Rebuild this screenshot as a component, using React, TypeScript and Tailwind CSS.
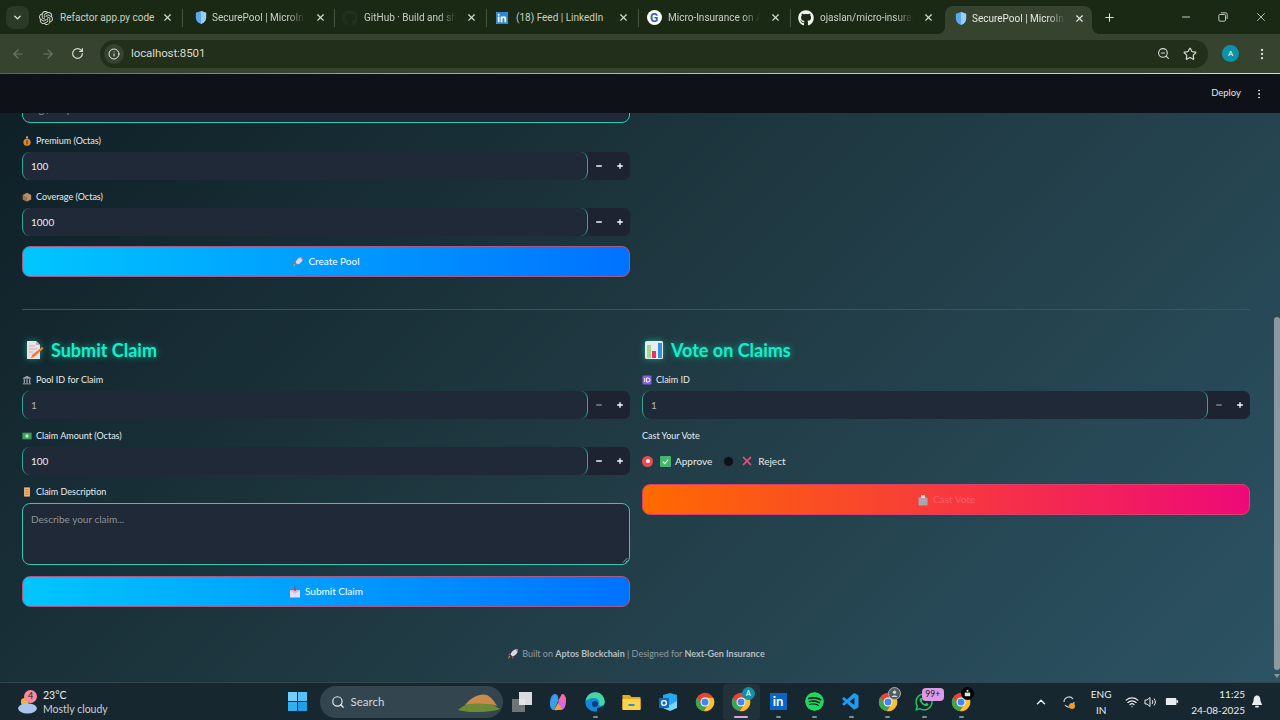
import { ArrowLeft, ArrowRight, ChevronDown, ChevronUp, Info, Minus, MoreVertical, Plus, RotateCw, Search, Star, Wifi, X, ZoomOut } from "lucide-react";
import { ReactNode } from "react";
import { FaGithub, FaWhatsapp } from "react-icons/fa";
import { SiLinkedin, SiOpenai, SiSpotify } from "react-icons/si";
import { VscVscode } from "react-icons/vsc";

const Shield = () => (
  <svg viewBox="0 0 14 16" className="w-[12px] h-[15px]">
    <path d="M7 0.5 L13 2.5 V8 C13 12 10 14.5 7 15.5 C4 14.5 1 12 1 8 V2.5 Z" fill="#5aa9ec" />
    <path d="M7 0.5 L13 2.5 V8 C13 12 10 14.5 7 15.5 Z" fill="#9ccdf3" />
  </svg>
);

const GoogleG = () => (
  <div className="w-[15px] h-[15px] rounded-full bg-white flex items-center justify-center">
    <span className="text-[12px] leading-none font-bold text-[#2b5fb8]">G</span>
  </div>
);

const ChromeIcon = ({ size = 20 }: { size?: number }) => (
  <svg viewBox="0 0 24 24" width={size} height={size}>
    <circle cx="12" cy="12" r="11" fill="#ea4335" />
    <path d="M2.6 6.2 L7.6 14.5 A5 5 0 0 0 13.5 16.8 L10.6 22.9 A11 11 0 0 1 2.6 6.2 Z" fill="#34a853" />
    <path d="M21.9 7 A11 11 0 0 1 10.6 22.9 L15.8 15 A5 5 0 0 0 12 7 Z" fill="#fbc02d" />
    <circle cx="12" cy="12" r="5.4" fill="#fff" />
    <circle cx="12" cy="12" r="4.2" fill="#4285f4" />
  </svg>
);

const tabs = [
  { title: "Refactor app.py code", icon: <SiOpenai size={14} color="#d8ddd4" /> },
  { title: "SecurePool | MicroIns", icon: <div className="ml-[5px]"><Shield /></div>, fade: true },
  { title: "GitHub · Build and sh", icon: <FaGithub size={16} color="#232f1f" />, fade: true },
  { title: "(18) Feed | LinkedIn", icon: <SiLinkedin size={12} color="#2f86d8" className="bg-white" /> },
  { title: "Micro-Insurance on A", icon: <GoogleG />, fade: true },
  { title: "ojaslan/micro-insurar", icon: <FaGithub size={16} color="#f2f4f0" />, fade: true },
];

const Tab = ({ title, icon, last, fade }: { title: string; icon: ReactNode; last: boolean; fade?: boolean }) => (
  <div className={`w-[152px] h-[18px] flex items-center pl-[7px] pr-[9px] gap-[6px] ${last ? "" : "border-r border-[#45523f]"}`}>
    <div className="w-4 flex justify-center shrink-0">{icon}</div>
    <span className={`flex-1 whitespace-nowrap text-[10px] text-[#c9cfc5] ${fade ? "[mask-image:linear-gradient(90deg,#000_78%,transparent_96%)]" : ""}`}>{title}</span>
    <X size={11} color="#d5dad1" strokeWidth={2.5} className="shrink-0" />
  </div>
);

const BrowserChrome = () => (
  <div className="shrink-0 font-['Roboto',sans-serif]">
    <div className="h-[34px] bg-[#1a2914] flex items-end">
      <div className="w-[31px] h-full flex items-center justify-end pr-[2px]">
        <div className="w-[23px] h-[23px] rounded-lg bg-[#2b3a26] flex items-center justify-center">
          <ChevronDown size={11} color="#e6eae3" strokeWidth={3} />
        </div>
      </div>
      <div className="flex items-center h-full pt-[1px]">
        {tabs.map((t, i) => (
          <Tab key={t.title} title={t.title} icon={t.icon} fade={t.fade} last={i === tabs.length - 1} />
        ))}
      </div>
      <div className="relative ml-[2px] w-[147px] h-[28px] bg-[#35432f] rounded-t-lg flex items-center pl-[10px] pr-[7px] pb-[4px] gap-[5px] before:absolute before:bottom-0 before:-left-2 before:w-2 before:h-2 before:bg-[radial-gradient(circle_at_0_0,transparent_8px,#35432f_8px)] after:absolute after:bottom-0 after:-right-2 after:w-2 after:h-2 after:bg-[radial-gradient(circle_at_100%_0,transparent_8px,#35432f_8px)]">
        <Shield />
        <span className="flex-1 whitespace-nowrap text-[10px] text-[#e4e8e1] [mask-image:linear-gradient(90deg,#000_78%,transparent_96%)]">SecurePool | MicroIn</span>
        <X size={11} color="#e4e8e1" strokeWidth={2.5} />
      </div>
      <div className="h-full flex items-center ml-[11px]">
        <Plus size={13} color="#d9ddd6" />
      </div>
      <div className="flex-1 h-full flex items-center justify-end pr-[12px] gap-[26px]">
        <Minus size={12} color="#c9cdc6" />
        <svg viewBox="0 0 12 12" className="w-[10px] h-[10px]" fill="none" stroke="#e2e5df" strokeWidth="1">
          <rect x="1" y="3" width="8" height="8" rx="1.2" />
          <path d="M3.5 1 H9.5 A1.5 1.5 0 0 1 11 2.5 V8.5" />
        </svg>
        <X size={14} color="#e2e5df" strokeWidth={1.3} />
      </div>
    </div>
    <div className="h-[39px] bg-[#35432f] flex items-center pl-[11px] pr-[11px]">
      <ArrowLeft size={14} color="#6f7b69" />
      <ArrowRight size={14} color="#6f7b69" className="ml-[16px]" />
      <RotateCw size={13} color="#d9ddd6" strokeWidth={2.2} className="ml-[16px]" />
      <div className="ml-[16px] flex-1 h-[28px] rounded-full bg-[#212f1b] flex items-center pl-[4px] pr-[11px]">
        <div className="w-[20px] h-[20px] rounded-full bg-[#35432f] flex items-center justify-center">
          <Info size={12} color="#e6eae3" />
        </div>
        <span className="ml-[7px] text-[11.5px] text-[#d8dcd4] tracking-[-0.1px]">localhost:8501</span>
        <div className="flex-1" />
        <ZoomOut size={13} color="#d9ddd6" />
        <Star size={14} color="#d9ddd6" className="ml-[13px]" />
      </div>
      <div className="ml-[14px] w-[17px] h-[17px] rounded-full bg-[#0d93a8] flex items-center justify-center text-[8px] text-white">A</div>
      <MoreVertical size={14} color="#d9ddd6" className="ml-[16px]" />
    </div>
    <div className="h-px bg-[linear-gradient(90deg,#c0392b,#f08a5a_30%,#f5c76a_70%,#f4d58a)]" />
  </div>
);

const Emoji = ({ kind }: { kind: string }) => {
  if (kind === "bag")
    return (
      <svg viewBox="0 0 12 12" className="w-[10px] h-[10px]">
        <rect x="5" y="0.5" width="2" height="2.5" fill="#e8c48c" />
        <circle cx="6" cy="7.5" r="4.3" fill="#e08a2c" />
        <rect x="5.2" y="5" width="1.6" height="5" fill="#6b3d10" />
      </svg>
    );
  if (kind === "box")
    return (
      <svg viewBox="0 0 12 12" className="w-[10px] h-[10px]">
        <path d="M6 1 L11 3.5 V9 L6 11.5 L1 9 V3.5 Z" fill="#b98e6b" />
        <path d="M6 6 V11.5 L1 9 V3.5 Z" fill="#9c7553" />
      </svg>
    );
  if (kind === "bank")
    return (
      <svg viewBox="0 0 12 12" className="w-[10px] h-[10px]" fill="#a09fa9">
        <path d="M6 1 L11 3.5 V4.5 H1 V3.5 Z" />
        <rect x="2" y="5" width="1.6" height="4.5" />
        <rect x="5.2" y="5" width="1.6" height="4.5" />
        <rect x="8.4" y="5" width="1.6" height="4.5" />
        <rect x="1" y="10" width="10" height="1.2" />
      </svg>
    );
  if (kind === "cash")
    return (
      <svg viewBox="0 0 12 12" className="w-[10px] h-[10px]">
        <rect x="0.5" y="2" width="11" height="8" fill="#3aa35a" />
        <circle cx="6" cy="6" r="2" fill="#b6e8c4" />
      </svg>
    );
  if (kind === "scroll")
    return (
      <svg viewBox="0 0 12 12" className="w-[10px] h-[10px]">
        <rect x="2.5" y="0.5" width="7" height="11" fill="#f2b777" />
        <path d="M4 3 H8 M4 5 H8 M4 7 H8 M4 9 H8" stroke="#b96f2c" strokeWidth="0.7" />
      </svg>
    );
  if (kind === "id")
    return (
      <svg viewBox="0 0 10 10" className="w-[10px] h-[10px]">
        <rect x="0.5" y="0.5" width="9" height="9" rx="1" fill="#8a5cd6" />
        <path d="M2.7 3 V7 M4.5 3 V7 H6 A2 2 0 0 0 6 3 H4.5" stroke="#fff" strokeWidth="0.9" fill="none" />
      </svg>
    );
  if (kind === "rocket")
    return (
      <svg viewBox="0 0 12 12" className="w-[12px] h-[12px]">
        <path d="M11 1 C7.5 1 4.5 3 3.5 6.5 L5.5 8.5 C9 7.5 11 4.5 11 1 Z" fill="#d8d8e6" />
        <path d="M11 1 C10 1 9 1.2 8.3 1.6 L10.4 3.7 C10.8 3 11 2 11 1 Z" fill="#e5486d" />
        <path d="M3.5 6.5 L1 7 L3 5 Z M5.5 8.5 L5 11 L7 9 Z" fill="#e5486d" />
        <path d="M3.5 8.5 L1 11 L2 8 Z" fill="#f39c32" />
      </svg>
    );
  if (kind === "inbox")
    return (
      <svg viewBox="0 0 12 12" className="w-[12px] h-[12px]">
        <rect x="1" y="4" width="10" height="7.5" fill="#eadcf2" />
        <path d="M1 4 L6 8 L11 4" fill="#cdbbdc" />
        <rect x="5.2" y="0.5" width="1.6" height="4.5" fill="#d92e66" />
      </svg>
    );
  if (kind === "ballot")
    return (
      <svg viewBox="0 0 12 12" className="w-[12px] h-[12px]">
        <rect x="1.5" y="3.5" width="9" height="8" rx="1" fill="#a9a6ad" />
        <rect x="4" y="1" width="4" height="3" fill="#d8d6da" />
      </svg>
    );
  return null;
};

const Label = ({ icon, text }: { icon: string; text: string }) => (
  <div className="h-[12px] flex items-center gap-[4px] text-[9px] text-[#e8ecef] mb-[5px]">
    <Emoji kind={icon} />
    <span>{text}</span>
  </div>
);

const StepInput = ({ icon, label, value, faded }: { icon: string; label: string; value: string; faded?: boolean }) => (
  <div>
    <Label icon={icon} text={label} />
    <div className="h-[28px] flex rounded-[7px] bg-[#1f2937]">
      <div className="flex-1 flex items-center pl-[8px] rounded-[8px] border-x border-[#2aa99a] text-[10px]">
        <span className={faded ? "text-[#aeb4bb]" : "text-[#e8ecef]"}>{value}</span>
      </div>
      <div className="w-[42px] flex items-center rounded-r-[7px] bg-[#1d2330]">
        <div className="flex-1 flex justify-center"><Minus size={8} strokeWidth={4} color={faded ? "#7b838c" : "#f0f2f5"} /></div>
        <div className="flex-1 flex justify-center"><Plus size={8} strokeWidth={4} color="#f8fafc" /></div>
      </div>
    </div>
  </div>
);

const BlueButton = ({ icon, label }: { icon: string; label: string }) => (
  <button className="w-full h-[31px] rounded-[8px] border border-[#a85a86] bg-[linear-gradient(90deg,#00c6ff,#0072ff)] flex items-center justify-center gap-[4px] text-[10px] text-white">
    <Emoji kind={icon} />
    {label}
  </button>
);

const Heading = ({ icon, text }: { icon: ReactNode; text: string }) => (
  <h2 className="h-[20px] pl-[2px] flex items-center gap-[7px] text-[18px] font-bold text-[#0ff0cc] [text-shadow:0_0_7px_rgba(0,255,208,0.6)] mb-[14px]">
    {icon}
    {text}
  </h2>
);

const MemoIcon = () => (
  <svg viewBox="0 0 20 20" className="w-[20px] h-[20px] [filter:drop-shadow(0_0_3px_rgba(0,255,208,0.5))]">
    <path d="M3 1 H12 L16 5 V19 H3 Z" fill="#ecdfe6" />
    <path d="M12 1 L16 5 H12 Z" fill="#bfb2bb" />
    <path d="M5 6 H11 M5 9 H13 M5 12 H9" stroke="#b9acb5" strokeWidth="0.8" />
    <path d="M18 7 L19.5 8.5 L10 17 L7 18 L8 15 Z" fill="#f07a3a" />
  </svg>
);

const ChartIcon = () => (
  <svg viewBox="0 0 20 20" className="w-[20px] h-[20px] [filter:drop-shadow(0_0_3px_rgba(0,255,208,0.5))]">
    <rect x="1" y="1" width="18" height="18" rx="1.5" fill="#e6edf0" />
    <rect x="3" y="5" width="4" height="13" fill="#a9d78a" />
    <rect x="8" y="11" width="4" height="7" fill="#e5336f" />
    <rect x="14" y="3" width="4" height="15" fill="#3c8dd6" />
  </svg>
);

const Radio = ({ on }: { on?: boolean }) =>
  on ? (
    <div className="w-[11px] h-[11px] rounded-full bg-[#f0484f] flex items-center justify-center">
      <div className="w-[4px] h-[4px] rounded-full bg-white" />
    </div>
  ) : (
    <div className="w-[11px] h-[11px] rounded-full bg-[#0e1117] border border-[#2c3a45]" />
  );

const Main = () => (
  <div className="h-[569px] flex overflow-hidden bg-[linear-gradient(135deg,#0f2027,#203a43_50%,#2c5364)]">
    <div className="flex-1 pl-[22px] pr-[22px]">
      <div className="w-[608px] -mt-[18px] h-[28px] rounded-[8px] border border-[#2fc9b4] bg-[#1f2937] pl-[8px] text-[10px] text-[#8b939b] flex items-center">
        e.g., Crop Insurance
      </div>
      <div className="w-[608px] mt-[12px] flex flex-col gap-[11px]">
        <StepInput icon="bag" label="Premium (Octas)" value="100" />
        <div className="flex flex-col gap-[10px]">
          <StepInput icon="box" label="Coverage (Octas)" value="1000" />
          <BlueButton icon="rocket" label="Create Pool" />
        </div>
      </div>
      <div className="mt-[32px] h-px bg-[#3b5560]" />
      <div className="mt-[30px] grid grid-cols-2 gap-[12px]">
        <div className="flex flex-col">
          <Heading icon={<MemoIcon />} text="Submit Claim" />
          <div className="flex flex-col gap-[11px]">
            <StepInput icon="bank" label="Pool ID for Claim" value="1" faded />
            <StepInput icon="cash" label="Claim Amount (Octas)" value="100" />
            <div>
              <Label icon="scroll" text="Claim Description" />
              <div className="relative h-[62px] rounded-[8px] border border-[#2fc9b4] bg-[#1f2937] pl-[8px] pt-[8px] text-[10px] text-[#8b939b]">
                Describe your claim...
                <svg viewBox="0 0 6 6" className="absolute right-[1px] bottom-[1px] w-[6px] h-[6px]" stroke="#c8ced3" strokeWidth="0.7">
                  <path d="M1 5.5 L5.5 1 M3.5 5.5 L5.5 3.5" />
                </svg>
              </div>
            </div>
          </div>
          <div className="mt-[11px]"><BlueButton icon="inbox" label="Submit Claim" /></div>
        </div>
        <div className="flex flex-col">
          <Heading icon={<ChartIcon />} text="Vote on Claims" />
          <StepInput icon="id" label="Claim ID" value="1" faded />
          <div className="mt-[11px] text-[9px] h-[12px] flex items-center text-[#e8ecef]">Cast Your Vote</div>
          <div className="mt-[12px] h-[14px] flex items-center text-[10px] text-[#e8ecef]">
            <Radio on />
            <div className="ml-[7px] w-[11px] h-[11px] rounded-[1px] bg-[#44b56b] flex items-center justify-center">
              <svg viewBox="0 0 10 10" className="w-[9px] h-[9px]" fill="none" stroke="#fff" strokeWidth="1.2">
                <path d="M2 5.2 L4.2 7.4 L8 2.8" />
              </svg>
            </div>
            <span className="ml-[4px]">Approve</span>
            <div className="ml-[11px]"><Radio /></div>
            <X size={14} color="#ef4f7c" strokeWidth={3} className="ml-[6px]" />
            <span className="ml-[4px]">Reject</span>
          </div>
          <button className="mt-[16px] h-[31px] rounded-[8px] border border-[#d9406e] bg-[linear-gradient(90deg,#ff6a00,#ee0979)] flex items-center justify-center gap-[4px] text-[10px] text-[#ff5c6a]">
            <Emoji kind="ballot" />
            Cast Vote
          </button>
        </div>
      </div>
      <p className="mt-[40px] text-center text-[9px] text-[#8f9ca4] flex items-center justify-center gap-[3px]">
        <Emoji kind="rocket" />
        <span>Built on <b className="font-bold text-[#b4bec4]">Aptos Blockchain</b> | Designed for <b className="font-bold text-[#b4bec4]">Next-Gen Insurance</b></span>
      </p>
    </div>
    <div className="w-[8px] shrink-0 flex flex-col pt-[204px]">
      <div className="h-[353px] w-[6px] ml-[2px] rounded-full bg-[#8a989f]" />
      <div className="mt-[4px] ml-[2px] w-0 h-0 border-x-[3px] border-t-[4px] border-x-transparent border-t-[#8a989f]" />
    </div>
  </div>
);

const Slot = ({ children, dot, active }: { children: ReactNode; dot?: boolean; active?: boolean }) => (
  <div className={`relative w-[36.6px] h-[36px] flex items-center justify-center rounded-[4px] ${active ? "bg-[#21323b]" : ""}`}>
    {children}
    {dot && <div className={`absolute bottom-[2px] h-[2px] rounded-full ${active ? "w-[14px] bg-[#d9a7e6]" : "w-[5px] bg-[#7f8e97]"}`} />}
  </div>
);

const Badge = ({ className, children }: { className: string; children: ReactNode }) => (
  <div className={`absolute flex items-center justify-center ${className}`}>{children}</div>
);

const Taskbar = () => (
  <div className="h-[38px] border-t border-[#34474f] bg-[#17272f] flex items-center text-[#e8edf0]">
    <div className="w-[279px] pl-[17px] flex items-center shrink-0">
      <div className="relative w-[22px] h-[24px]">
        <svg viewBox="0 0 22 18" className="absolute bottom-0 left-0 w-[21px] h-[17px]">
          <circle cx="8" cy="5" r="4" fill="#f2b33d" />
          <ellipse cx="11" cy="12" rx="10" ry="5.5" fill="#a9c5ee" />
        </svg>
        <Badge className="top-0 left-[7px] w-[13px] h-[13px] rounded-full bg-[#f98b9a] text-[9px] text-[#40121b]">4</Badge>
      </div>
      <div className="ml-[4px] text-[10.5px] leading-[14px]">
        <div>23°C</div>
        <div className="text-[#c8d1d6]">Mostly cloudy</div>
      </div>
    </div>
    <Slot>
      <div className="grid grid-cols-2 gap-[1px] w-[19px] h-[19px]">
        <div className="bg-[#6fd0fb]" />
        <div className="bg-[#52c3f7]" />
        <div className="bg-[#2fb0f2]" />
        <div className="bg-[#1e9fe8]" />
      </div>
    </Slot>
    <div className="ml-[4px] w-[183px] h-[32px] rounded-full bg-[#33464f] flex items-center pl-[11px] pr-[2px] shrink-0 text-[11.5px] text-[#d2dade]">
      <Search size={14} color="#e8edf0" />
      <span className="ml-[6px]">Search</span>
      <div className="flex-1" />
      <svg viewBox="0 0 44 20" className="w-[44px] h-[20px]">
        <path d="M1 18 C8 12 14 10 24 10 C32 10 38 14 43 17 C32 21 12 21 1 18 Z" fill="#6d8a36" />
        <path d="M8 13 C14 5 24 1 30 3 C34 5 38 10 40 14 C30 11 18 11 8 13 Z" fill="#c98a4c" />
      </svg>
    </div>
    <div className="ml-[1px] flex items-center">
      <Slot>
        <div className="relative w-[20px] h-[20px]">
          <div className="absolute left-0 bottom-0 w-[13px] h-[13px] bg-[#6e7478]" />
          <div className="absolute right-0 top-0 w-[13px] h-[13px] bg-[#eef1f3] opacity-90" />
        </div>
      </Slot>
      <Slot>
        <svg viewBox="0 0 20 20" className="w-[20px] h-[20px]">
          <path d="M7 2 C4 2 2 6 2 11 C2 15 3 18 6 18 L10 9 C11 6 10 2 7 2 Z" fill="#3f8ef0" />
          <path d="M13 18 C16 18 18 14 18 9 C18 5 17 2 14 2 L10 11 C9 14 10 18 13 18 Z" fill="#d56ae0" />
          <path d="M10 9 L14 2 C16 2 18 6 18 9 Z" fill="#f06ab0" />
          <path d="M10 11 L6 18 C9 18.5 13 18 14 17 Z" fill="#f5a13d" />
          <path d="M7 2 L10 9 L6 18 C4 18 2 14 2 11 Z" fill="#38a0e8" />
        </svg>
      </Slot>
      <Slot dot>
        <svg viewBox="0 0 20 20" className="w-[20px] h-[20px]">
          <circle cx="10" cy="10" r="9.7" fill="#1686d9" />
          <path d="M0.6 9 C1.5 3.5 6 0.3 10.5 0.3 C16 0.3 19.7 5 19.7 10 C19.7 13.5 16 14.5 14 13 C15 9 13 6 9 6 C5 6 2 8 0.6 9 Z" fill="#46d6a0" />
          <circle cx="10" cy="12" r="3" fill="#0b3e7e" />
          <path d="M12 16 C14 16 17 15 19 13 C18 16 15 19 12 19.6 Z" fill="#17272f" />
        </svg>
      </Slot>
      <Slot>
        <svg viewBox="0 0 20 20" className="w-[21px] h-[20px]">
          <path d="M1 3 H8 L10 5 H19 V17 H1 Z" fill="#e8a91e" />
          <rect x="1" y="7" width="18" height="11" fill="#fdd34e" />
          <rect x="7" y="12" width="6" height="2" fill="#2a8fd8" />
        </svg>
      </Slot>
      <Slot>
        <svg viewBox="0 0 20 20" className="w-[20px] h-[20px]">
          <path d="M5 3 L12 1 L19 3 V15 L12 18 L5 15 Z" fill="#27a8e8" />
          <path d="M5 9 L12 13 L19 9 V16 L12 19 L5 16 Z" fill="#7ad6f7" />
          <rect x="1" y="6" width="10" height="10" rx="1" fill="#0f6cbd" />
          <circle cx="6" cy="11" r="2.4" fill="none" stroke="#fff" strokeWidth="1.3" />
        </svg>
      </Slot>
      <Slot><ChromeIcon /></Slot>
      <Slot dot active>
        <ChromeIcon />
        <Badge className="top-[3px] right-[5px] w-[13px] h-[13px] rounded-full bg-[#0d93a8] text-[7px] text-white">A</Badge>
      </Slot>
      <Slot dot>
        <div className="w-[17px] h-[17px] bg-[#0a66c2] flex items-center justify-center text-[13px] leading-none font-bold text-white">in</div>
      </Slot>
      <Slot dot><SiSpotify size={19} color="#1ed760" className="bg-[#0c1a12] rounded-full" /></Slot>
      <Slot dot><VscVscode size={20} color="#1f9cf0" /></Slot>
      <Slot dot>
        <ChromeIcon />
        <Badge className="top-[3px] right-[5px] w-[13px] h-[13px] rounded-full bg-[#555d63] border border-[#a9b1b6]">
          <svg viewBox="0 0 10 10" className="w-[9px] h-[9px]" fill="#d5dade">
            <circle cx="5" cy="3.6" r="1.8" />
            <path d="M1.8 9 C2 6.5 8 6.5 8.2 9 Z" />
          </svg>
        </Badge>
      </Slot>
      <Slot dot>
        <FaWhatsapp size={20} color="#27c664" />
        <Badge className="top-[4px] right-[-1px] w-[22px] h-[13px] rounded-[4px] bg-[#d99be6] text-[8.5px] text-[#24102a]">99+</Badge>
      </Slot>
      <Slot dot>
        <ChromeIcon />
        <Badge className="top-[3px] right-[5px] w-[13px] h-[13px] rounded-full bg-black">
          <svg viewBox="0 0 10 10" className="w-[9px] h-[9px]" fill="#dfe3e6">
            <rect x="4" y="1" width="2" height="2" />
            <rect x="2" y="4" width="6" height="4" />
          </svg>
        </Badge>
      </Slot>
    </div>
    <div className="flex-1 flex items-center justify-end pr-[17px]">
      <ChevronUp size={14} color="#eef1f3" strokeWidth={2.5} />
      <svg viewBox="0 0 16 16" className="ml-[13px] w-[16px] h-[16px]" fill="none" stroke="#cfd6da" strokeWidth="1.2">
        <path d="M3 8 A5 5 0 0 1 12 5 M13 8 A5 5 0 0 1 4 11" />
        <circle cx="11" cy="12" r="3" fill="#f59a23" stroke="none" />
      </svg>
      <div className="ml-[12px] w-[24px] text-center text-[10px] leading-[16px]">ENG<br />IN</div>
      <Wifi size={14} color="#e8edf0" className="ml-[12px]" />
      <svg viewBox="0 0 14 14" className="ml-[4px] w-[14px] h-[14px]" fill="none" stroke="#e8edf0" strokeWidth="1">
        <path d="M2 5 H4 L7 2.5 V11.5 L4 9 H2 Z" />
        <path d="M9 5 C10 6 10 8 9 9 M11 3.5 C12.8 5.5 12.8 8.5 11 10.5" />
      </svg>
      <svg viewBox="0 0 16 12" className="ml-[8px] w-[14px] h-[11px]">
        <rect x="1" y="2" width="12" height="8" rx="1" fill="#e8edf0" />
        <rect x="13" y="4.5" width="2" height="3" fill="#e8edf0" />
      </svg>
      <div className="ml-[12px] text-right text-[10px] leading-[16px]">
        <div>11:25</div>
        <div>24-08-2025</div>
      </div>
      <svg viewBox="0 0 14 16" className="ml-[6px] w-[12px] h-[15px]" fill="#e8edf0">
        <path d="M7 1 C4 1 3 4 3 7 L1 12 H13 L11 7 C11 4 10 1 7 1 Z" />
        <rect x="5" y="13" width="4" height="2" />
      </svg>
    </div>
  </div>
);

export default function App() {
  return (
    <div className="w-[1280px] h-[720px] overflow-hidden flex flex-col font-['Lato','Noto_Sans',sans-serif]">
      <BrowserChrome />
      <div className="h-[39px] bg-[#0e1117] flex items-center justify-end pr-[15px] text-[9.5px] text-[#e4e7ea] shrink-0 relative z-10">
        Deploy
        <MoreVertical size={12} color="#e4e7ea" className="ml-[12px]" />
      </div>
      <Main />
      <Taskbar />
    </div>
  );
}
